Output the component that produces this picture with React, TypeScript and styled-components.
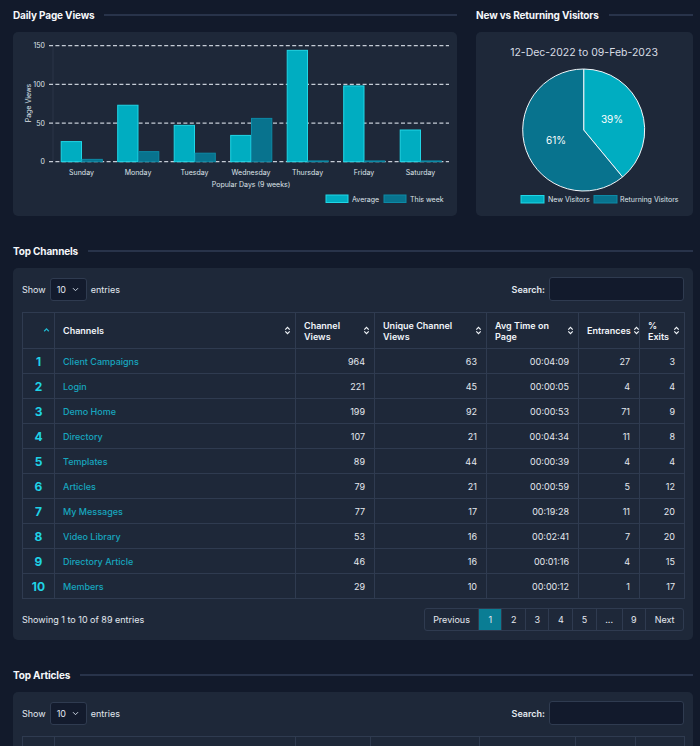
import React from "react";
import styled, { createGlobalStyle } from "styled-components";

const GlobalStyle = createGlobalStyle`
  body {
    margin: 0;
    background: #121a2b;
    font-family: Inter, "Noto Sans", "Liberation Sans", sans-serif;
    color: #e2e8f0;
  }
`;

const CYAN = "#00adc1";
const CYAN_EDGE = "#20d6e6";
const TEAL = "#08738e";
const TEAL_EDGE = "#0d8aa6";

const days = [
  { day: "Sunday", avg: 26, week: 3 },
  { day: "Monday", avg: 73, week: 13 },
  { day: "Tuesday", avg: 47, week: 11 },
  { day: "Wednesday", avg: 34, week: 56 },
  { day: "Thursday", avg: 144, week: 1 },
  { day: "Friday", avg: 98, week: 1 },
  { day: "Saturday", avg: 41, week: 1 },
];

const channels = [
  ["Client Campaigns", 964, 63, "00:04:09", 27, 3],
  ["Login", 221, 45, "00:00:05", 4, 4],
  ["Demo Home", 199, 92, "00:00:53", 71, 9],
  ["Directory", 107, 21, "00:04:34", 11, 8],
  ["Templates", 89, 44, "00:00:39", 4, 4],
  ["Articles", 79, 21, "00:00:59", 5, 12],
  ["My Messages", 77, 17, "00:19:28", 11, 20],
  ["Video Library", 53, 16, "00:02:41", 7, 20],
  ["Directory Article", 46, 16, "00:01:16", 4, 15],
  ["Members", 29, 10, "00:00:12", 1, 17],
];

const channelCols = [
  { label: "", width: 32, active: true },
  { label: "Channels", width: 241 },
  { label: "Channel Views", width: 79 },
  { label: "Unique Channel Views", width: 112 },
  { label: "Avg Time on Page", width: 92 },
  { label: "Entrances", width: 61 },
  { label: "% Exits", width: 45 },
];

// only the top edge of this table is in view
const articleCols = [
  { label: "", width: 32 },
  { label: "", width: 241 },
  { label: "", width: 75 },
  { label: "", width: 109 },
  { label: "", width: 96 },
  { label: "", width: 60 },
  { label: "", width: 49 },
];

const pages = ["Previous", "1", "2", "3", "4", "5", "...", "9", "Next"];

function SortIcon({ active }: { active?: boolean }) {
  if (active) {
    return (
      <svg width="7" height="9" viewBox="0 0 7 9">
        <path d="M1.2 5.2 L3.5 2.9 L5.8 5.2" fill="none" stroke="#1fb8d0" strokeWidth="1.3" />
      </svg>
    );
  }
  return (
    <svg width="7" height="9" viewBox="0 0 7 9">
      <path d="M1.3 3.6 L3.5 1.4 L5.7 3.6" fill="none" stroke="#f1f5f9" strokeWidth="1.2" />
      <path d="M1.3 5.4 L3.5 7.6 L5.7 5.4" fill="none" stroke="#f1f5f9" strokeWidth="1.2" />
    </svg>
  );
}

function BarChart() {
  const y = (v: number) => 129.7 - v * 0.7733;
  const start = 40.25;
  const step = 56.5;
  const bw = 20.3;
  return (
    <svg width="444" height="184" viewBox="0 0 444 184" fontFamily="Inter, sans-serif">
      <line x1="40" y1="12" x2="40" y2="130" stroke="#2a3548" strokeWidth="1" />
      {[0, 50, 100, 150].map((t) => (
        <g key={t}>
          <line x1="36" x2="436" y1={y(t)} y2={y(t)} stroke="#c5ccd6" strokeWidth="1.2" strokeDasharray="4 2.4" />
          <text x="32" y={y(t) + 2.5} fontSize="7" fill="#dfe4ea" textAnchor="end">
            {t}
          </text>
        </g>
      ))}
      <text x="0" y="0" fontSize="7" fill="#dfe4ea" textAnchor="middle" transform="translate(18 71) rotate(-90)">
        Page Views
      </text>
      {days.map((d, i) => {
        const c = start + step * (i + 0.5);
        return (
          <g key={d.day}>
            <rect x={c - bw} y={y(d.avg)} width={bw} height={129.7 - y(d.avg)} fill={CYAN} stroke={CYAN_EDGE} strokeWidth="1" />
            <rect x={c + 0.5} y={y(d.week)} width={bw} height={129.7 - y(d.week)} fill={TEAL} stroke={TEAL_EDGE} strokeWidth="1" />
            <text x={c} y="143" fontSize="7" fill="#dfe4ea" textAnchor="middle">
              {d.day}
            </text>
          </g>
        );
      })}
      <text x="238" y="155" fontSize="7" fill="#dfe4ea" textAnchor="middle">
        Popular Days (9 weeks)
      </text>
      <rect x="313" y="163" width="22" height="7.5" fill={CYAN} stroke={CYAN_EDGE} />
      <text x="339" y="169.5" fontSize="7" fill="#dfe4ea">Average</text>
      <rect x="371" y="163" width="22" height="7.5" fill={TEAL} stroke={TEAL_EDGE} />
      <text x="397" y="169.5" fontSize="7" fill="#dfe4ea">This week</text>
    </svg>
  );
}

function PieChart() {
  const cx = 107.7;
  const cy = 98;
  const r = 61;
  const a = ((-90 + 0.39 * 360) * Math.PI) / 180;
  const ex = cx + r * Math.cos(a);
  const ey = cy + r * Math.sin(a);
  return (
    <svg width="217" height="184" viewBox="0 0 217 184" fontFamily="Inter, sans-serif">
      <text x="108" y="23.5" fontSize="10.5" fill="#d8dde5" textAnchor="middle">
        12-Dec-2022 to 09-Feb-2023
      </text>
      <path d={`M${cx} ${cy} L${cx} ${cy - r} A${r} ${r} 0 0 1 ${ex} ${ey} Z`} fill={CYAN} stroke="#f4f7fa" strokeWidth="1" />
      <path d={`M${cx} ${cy} L${ex} ${ey} A${r} ${r} 0 1 1 ${cx} ${cy - r} Z`} fill={TEAL} stroke="#f4f7fa" strokeWidth="1" />
      <text x="136" y="91" fontSize="10" fill="#ffffff" textAnchor="middle">39%</text>
      <text x="80" y="112" fontSize="10" fill="#ffffff" textAnchor="middle">61%</text>
      <rect x="45" y="163.5" width="23" height="7.5" fill={CYAN} stroke={CYAN_EDGE} />
      <text x="72" y="170" fontSize="7" fill="#dfe4ea">New Visitors</text>
      <rect x="118" y="163.5" width="23" height="7.5" fill={TEAL} stroke={TEAL_EDGE} />
      <text x="144" y="170" fontSize="7" fill="#dfe4ea">Returning Visitors</text>
    </svg>
  );
}

function Controls() {
  return (
    <ControlRow>
      <ControlGroup>
        Show
        <Select>
          10
          <svg width="7" height="5" viewBox="0 0 7 5">
            <path d="M1 1.2 L3.5 3.7 L6 1.2" fill="none" stroke="#cbd5e1" strokeWidth="1" />
          </svg>
        </Select>
        entries
      </ControlGroup>
      <ControlGroup>
        <strong>Search:</strong>
        <SearchBox />
      </ControlGroup>
    </ControlRow>
  );
}

type Col = { label: string; width: number; active?: boolean };

function HeaderRow({ cols }: { cols: Col[] }) {
  return (
    <>
      <colgroup>
        {cols.map((c, i) => (
          <col key={i} style={{ width: c.width }} />
        ))}
      </colgroup>
      <thead>
        <tr>
          {cols.map((c, i) => (
            <Th key={i}>
              <ThInner>
                <span>{c.label}</span>
                <SortIcon active={c.active} />
              </ThInner>
            </Th>
          ))}
        </tr>
      </thead>
    </>
  );
}

export default function App() {
  return (
    <>
      <GlobalStyle />
      <Page>
        <TopRow>
          <section>
            <SectionHead>
              <SectionTitle>Daily Page Views</SectionTitle>
              <Rule />
            </SectionHead>
            <Card>
              <BarChart />
            </Card>
          </section>
          <section>
            <SectionHead>
              <SectionTitle>New vs Returning Visitors</SectionTitle>
              <Rule />
            </SectionHead>
            <Card>
              <PieChart />
            </Card>
          </section>
        </TopRow>

        <Section>
          <SectionHead>
            <SectionTitle>Top Channels</SectionTitle>
            <Rule />
          </SectionHead>
          <TableCard>
            <Controls />
            <Table>
              <HeaderRow cols={channelCols} />
              <tbody>
                {channels.map((row, i) => (
                  <tr key={i}>
                    <Rank>{i + 1}</Rank>
                    <NameCell>{row[0]}</NameCell>
                    {row.slice(1).map((v, j) => (
                      <Num key={j}>{v}</Num>
                    ))}
                  </tr>
                ))}
              </tbody>
            </Table>
            <Footer>
              <span>Showing 1 to 10 of 89 entries</span>
              <Pager>
                {pages.map((p) => (
                  <PageBtn key={p} $active={p === "1"}>
                    {p}
                  </PageBtn>
                ))}
              </Pager>
            </Footer>
          </TableCard>
        </Section>

        <Section>
          <SectionHead>
            <SectionTitle>Top Articles</SectionTitle>
            <Rule />
          </SectionHead>
          <TableCard>
            <Controls />
            <Table>
              <HeaderRow cols={articleCols} />
            </Table>
          </TableCard>
        </Section>
      </Page>
    </>
  );
}

const Page = styled.div`
  padding: 8px 7px 40px 13px;
  font-size: 9px;
`;

const TopRow = styled.div`
  display: grid;
  grid-template-columns: 444px 217px;
  column-gap: 19px;
`;

const Section = styled.section`
  margin-top: 28px;
`;

const SectionHead = styled.div`
  display: flex;
  align-items: center;
  gap: 10px;
  height: 14px;
  margin-bottom: 10px;
`;

const SectionTitle = styled.h2`
  margin: 0;
  font-size: 10px;
  font-weight: 700;
  letter-spacing: -0.15px;
  color: #f5f7fa;
  white-space: nowrap;
`;

const Rule = styled.div`
  flex: 1;
  height: 2px;
  background: #28334a;
`;

const Card = styled.div`
  background: #1e2839;
  border-radius: 5px;
  height: 184px;
  svg {
    display: block;
  }
`;

const TableCard = styled.div`
  background: #1e2839;
  border-radius: 5px;
  padding: 9px;
`;

const ControlRow = styled.div`
  display: flex;
  justify-content: space-between;
  align-items: center;
  height: 24px;
  margin-bottom: 11px;
`;

const ControlGroup = styled.div`
  display: flex;
  align-items: center;
  gap: 4px;
  color: #e2e8f0;
  strong {
    font-weight: 600;
  }
`;

const Select = styled.div`
  box-sizing: border-box;
  width: 37px;
  height: 23px;
  display: flex;
  align-items: center;
  justify-content: space-between;
  padding: 0 7px 0 6px;
  background: #131b2d;
  border: 1px solid #2f3b50;
  border-radius: 3px;
  color: #e2e8f0;
`;

const SearchBox = styled.div`
  box-sizing: border-box;
  width: 135px;
  height: 24px;
  background: #121a2c;
  border: 1px solid #2f3b50;
  border-radius: 3px;
`;

const Table = styled.table`
  width: 100%;
  table-layout: fixed;
  border-collapse: collapse;
  td,
  th {
    border: 1px solid #2f3b50;
  }
  tbody tr {
    height: 25px;
  }
`;

const Th = styled.th`
  height: 35px;
  padding: 0 4px 0 8px;
  text-align: left;
  font-weight: 600;
  color: #f1f5f9;
  line-height: 11px;
`;

const ThInner = styled.div`
  display: flex;
  align-items: center;
  justify-content: space-between;
  gap: 2px;
  svg {
    flex: none;
  }
`;

const Rank = styled.td`
  text-align: center;
  font-size: 12px;
  font-weight: 700;
  color: #1fd3e6;
`;

const NameCell = styled.td`
  padding: 0 8px;
  color: #17a6bf;
  font-weight: 500;
`;

const Num = styled.td`
  padding: 0 9px;
  text-align: right;
  color: #e5e9ef;
`;

const Footer = styled.div`
  display: flex;
  justify-content: space-between;
  align-items: center;
  margin-top: 9px;
  color: #e2e8f0;
`;

const Pager = styled.div`
  display: flex;
  height: 21px;
  border: 1px solid #2f3b50;
  border-radius: 3px;
  overflow: hidden;
`;

const PageBtn = styled.div<{ $active?: boolean }>`
  display: flex;
  align-items: center;
  justify-content: center;
  min-width: 23px;
  box-sizing: border-box;
  padding: 0 8.5px;
  color: #e5e9ef;
  background: ${(p) => (p.$active ? "#0a7d94" : "transparent")};
  & + & {
    border-left: 1px solid #2f3b50;
  }
`;
